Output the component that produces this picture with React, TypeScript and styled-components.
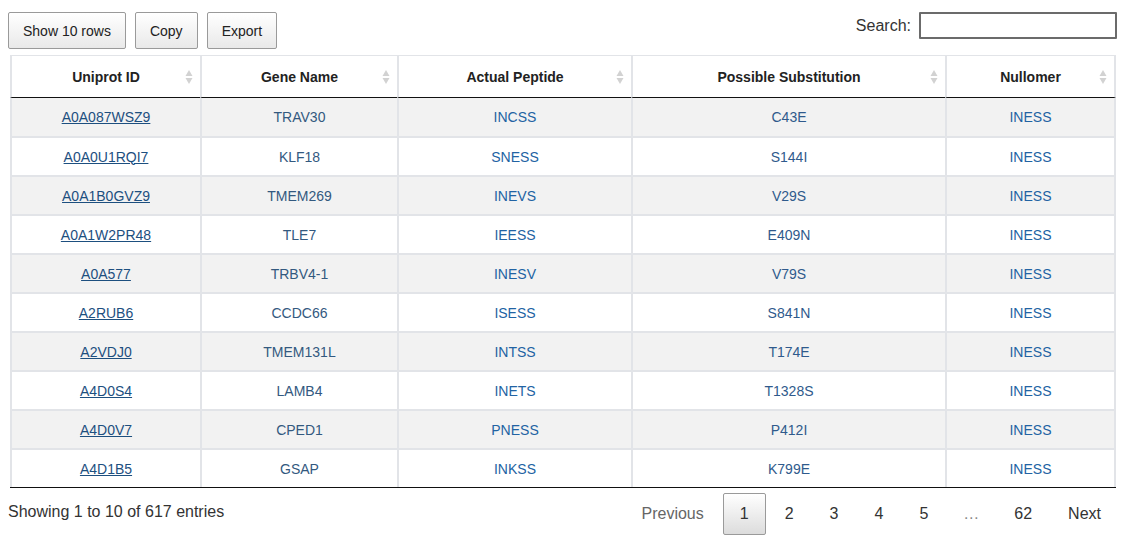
import React from "react";
import styled, { createGlobalStyle } from "styled-components";

const Global = createGlobalStyle`
  body {
    margin: 8px;
    background: #fff;
    font-family: "Liberation Sans", Arial, sans-serif;
    color: #333;
  }
`;

const Wrapper = styled.div`
  width: 1110px;
`;

const Toolbar = styled.div`
  display: flex;
  justify-content: space-between;
  align-items: flex-start;
  padding-top: 4px;
  height: 43px;
`;

const ButtonGroup = styled.div`
  display: flex;
  gap: 9px;
`;

const ToolButton = styled.button`
  height: 37px;
  padding: 0 14px;
  border: 1px solid #9a9a9a;
  border-radius: 2px;
  background: linear-gradient(to bottom, #ffffff 0%, #e9e9e9 100%);
  font-family: "Liberation Sans", Arial, sans-serif;
  font-size: 14px;
  color: #222;
`;

const SearchLabel = styled.label`
  display: flex;
  align-items: center;
  gap: 8px;
  font-size: 16px;
  color: #333;
  margin-right: 1px;
`;

const SearchInput = styled.input`
  box-sizing: border-box;
  width: 198px;
  height: 27px;
  border: 2px solid #6b6b6b;
  border-radius: 1px;
  padding: 0 4px;
`;

const Table = styled.table`
  margin-left: 2px;
  width: 1106px;
  table-layout: fixed;
  border-collapse: separate;
  border-spacing: 0;
  border-bottom: 1px solid #111;
  font-size: 14px;
`;

const Th = styled.th<{ $w: number; $last?: boolean }>`
  box-sizing: border-box;
  width: ${(p) => p.$w}px;
  height: 43px;
  position: relative;
  padding: 0 18px;
  text-align: center;
  font-weight: bold;
  color: #222;
  border-top: 1px solid #e2e4e8;
  border-left: 2px solid #e2e4e8;
  border-right: ${(p) => (p.$last ? "2px solid #e2e4e8" : "none")};
  border-bottom: 1px solid #111;
`;

const SortIcon = styled.svg`
  position: absolute;
  right: 7px;
  top: 50%;
  transform: translateY(-50%);
`;

const Row = styled.tr<{ $odd: boolean }>`
  background: ${(p) => (p.$odd ? "#f2f2f2" : "#ffffff")};
`;

const Td = styled.td<{ $first: boolean; $last?: boolean; $color: string }>`
  box-sizing: border-box;
  height: ${(p) => (p.$first ? 38 : 39)}px;
  padding: 0 10px;
  text-align: center;
  color: ${(p) => p.$color};
  border-left: 2px solid #e2e4e8;
  border-right: ${(p) => (p.$last ? "2px solid #e2e4e8" : "none")};
  border-top: ${(p) => (p.$first ? "none" : "2px solid #e2e4e8")};
`;

const IdLink = styled.a`
  color: #1d4f7f;
  text-decoration: underline;
`;

const Footer = styled.div`
  display: flex;
  justify-content: space-between;
  align-items: flex-start;
`;

const Info = styled.div`
  font-size: 16px;
  color: #333;
  margin-top: 15px;
`;

const Pager = styled.div`
  display: flex;
  align-items: center;
  gap: 2px;
  margin-top: 5px;
  margin-right: 0;
`;

const PageButton = styled.span<{ $current?: boolean; $disabled?: boolean }>`
  box-sizing: border-box;
  min-width: 41px;
  height: 42px;
  display: flex;
  align-items: center;
  justify-content: center;
  padding: 0 16px;
  font-size: 16px;
  color: ${(p) => (p.$disabled ? "#666" : "#333")};
  border: 1px solid ${(p) => (p.$current ? "#9a9a9a" : "transparent")};
  border-radius: 2px;
  background: ${(p) =>
    p.$current ? "linear-gradient(to bottom, #ffffff 0%, #dcdcdc 100%)" : "transparent"};
`;

const Ellipsis = styled.span`
  padding: 0 16px;
  font-size: 16px;
  color: #888;
`;

const columns = [
  { title: "Uniprot ID", w: 190 },
  { title: "Gene Name", w: 197 },
  { title: "Actual Peptide", w: 234 },
  { title: "Possible Substitution", w: 314 },
  { title: "Nullomer", w: 171 },
];

const rows = [
  ["A0A087WSZ9", "TRAV30", "INCSS", "C43E", "INESS"],
  ["A0A0U1RQI7", "KLF18", "SNESS", "S144I", "INESS"],
  ["A0A1B0GVZ9", "TMEM269", "INEVS", "V29S", "INESS"],
  ["A0A1W2PR48", "TLE7", "IEESS", "E409N", "INESS"],
  ["A0A577", "TRBV4-1", "INESV", "V79S", "INESS"],
  ["A2RUB6", "CCDC66", "ISESS", "S841N", "INESS"],
  ["A2VDJ0", "TMEM131L", "INTSS", "T174E", "INESS"],
  ["A4D0S4", "LAMB4", "INETS", "T1328S", "INESS"],
  ["A4D0V7", "CPED1", "PNESS", "P412I", "INESS"],
  ["A4D1B5", "GSAP", "INKSS", "K799E", "INESS"],
];

const colColors = ["#1d4f7f", "#33597f", "#2263a3", "#2f5a8c", "#2263a3"];

const Sort = () => (
  <SortIcon width="8" height="16" viewBox="0 0 8 16">
    <path d="M4 1 L7.5 7 L0.5 7 Z" fill="#d2d2d2" />
    <path d="M4 15 L7.5 9 L0.5 9 Z" fill="#d2d2d2" />
  </SortIcon>
);

export default function App() {
  return (
    <>
      <Global />
      <Wrapper>
        <Toolbar>
          <ButtonGroup>
            <ToolButton>Show 10 rows</ToolButton>
            <ToolButton>Copy</ToolButton>
            <ToolButton>Export</ToolButton>
          </ButtonGroup>
          <SearchLabel>
            Search:
            <SearchInput type="search" />
          </SearchLabel>
        </Toolbar>
        <Table>
          <thead>
            <tr>
              {columns.map((c, i) => (
                <Th key={c.title} $w={c.w} $last={i === columns.length - 1}>
                  {c.title}
                  <Sort />
                </Th>
              ))}
            </tr>
          </thead>
          <tbody>
            {rows.map((r, ri) => (
              <Row key={r[0]} $odd={ri % 2 === 0}>
                {r.map((cell, ci) => (
                  <Td
                    key={ci}
                    $first={ri === 0}
                    $last={ci === r.length - 1}
                    $color={colColors[ci]}
                  >
                    {ci === 0 ? <IdLink href="#">{cell}</IdLink> : cell}
                  </Td>
                ))}
              </Row>
            ))}
          </tbody>
        </Table>
        <Footer>
          <Info>Showing 1 to 10 of 617 entries</Info>
          <Pager>
            <PageButton $disabled>Previous</PageButton>
            <PageButton $current>1</PageButton>
            <PageButton>2</PageButton>
            <PageButton>3</PageButton>
            <PageButton>4</PageButton>
            <PageButton>5</PageButton>
            <Ellipsis>…</Ellipsis>
            <PageButton>62</PageButton>
            <PageButton>Next</PageButton>
          </Pager>
        </Footer>
      </Wrapper>
    </>
  );
}
